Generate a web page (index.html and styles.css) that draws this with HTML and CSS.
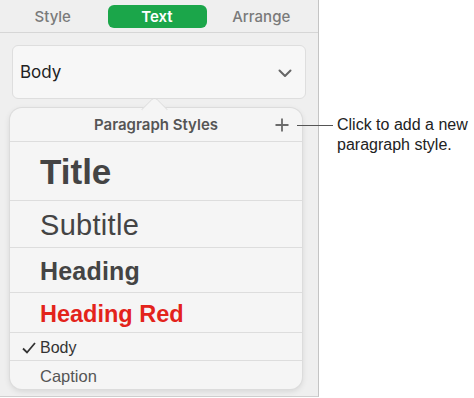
FILE: index.html
```html
<!DOCTYPE html>
<html lang="en">
<head>
    <meta charset="UTF-8">
    <title>Paragraph Styles</title>
    <link rel="stylesheet" href="styles.css">
</head>
<body>
    <div class="panel">
        <div class="tabs">
            <span class="tab">Style</span>
            <span class="tab active">Text</span>
            <span class="tab">Arrange</span>
        </div>

        <div class="dropdown">
            <span>Body</span>
            <svg class="chevron" width="14" height="9" viewBox="0 0 14 9">
                <path d="M1.5 1.5 L7 7 L12.5 1.5" fill="none" stroke="#666" stroke-width="2" stroke-linecap="round" stroke-linejoin="round"/>
            </svg>
        </div>

        <div class="popover">
            <div class="pop-head">
                <span>Paragraph Styles</span>
                <svg class="plus" width="14" height="14" viewBox="0 0 14 14">
                    <path d="M7 0.5 V13.5 M0.5 7 H13.5" stroke="#6b6b6b" stroke-width="1.8"/>
                </svg>
            </div>
            <div class="row title">Title</div>
            <div class="row subtitle">Subtitle</div>
            <div class="row heading">Heading</div>
            <div class="row heading-red">Heading Red</div>
            <div class="row body-style">
                <svg class="check" width="14" height="12" viewBox="0 0 14 12">
                    <path d="M1 6.5 L5 10.5 L13 1" fill="none" stroke="#333" stroke-width="1.8"/>
                </svg>
                Body
            </div>
            <div class="row caption">Caption</div>
        </div>
    </div>

    <!-- leader line to the plus button -->
    <div class="callout">
        <div class="leader"></div>
        <p>Click to add a new<br>paragraph style.</p>
    </div>
</body>
</html>
```

FILE: styles.css
```css
body {
    margin: 0;
    width: 474px;
    height: 398px;
    overflow: hidden;
    display: flex;
    background: #ffffff;
    font-family: Inter, "Liberation Sans", sans-serif;
    position: relative;
}

.panel {
    width: 318px;
    height: 396px;
    background: #efefef;
    border-right: 1px solid #c4c4c4;
    border-bottom: 1px solid #cfcfcf;
    display: flex;
    flex-direction: column;
}

.tabs {
    height: 31px;
    border-bottom: 1px solid #d6d6d6;
    display: flex;
    align-items: center;
    padding: 1px 12px 0 8px;
}

.tab {
    flex: 1;
    text-align: center;
    font-size: 15px;
    font-weight: 500;
    color: #7a7a7a;
    line-height: 23px;
}

.tab.active {
    flex: 0 0 99px;
    margin: 0 10px;
    background: #1ba64a;
    color: #ffffff;
    font-weight: 600;
    border-radius: 6px;
}

.dropdown {
    margin: 12px 12px 0 12px;
    height: 52px;
    background: #f7f7f7;
    border: 1px solid #dedede;
    border-radius: 6px;
    display: flex;
    align-items: center;
    justify-content: space-between;
    padding: 0 13px 0 7px;
    font-size: 17px;
    color: #222222;
}

.chevron {
    margin-top: 2px;
}

.popover {
    position: relative;
    margin: 9px 0 0 10px;
    width: 292px;
    height: 281px;
    background: #f5f5f5;
    border-radius: 12px;
    box-shadow: 0 0 0 1px #dcdcdc, 0 2px 6px rgba(0, 0, 0, 0.12);
    display: flex;
    flex-direction: column;
}

.popover::before {
    content: "";
    position: absolute;
    top: -8px;
    left: 135px;
    width: 18px;
    height: 18px;
    background: #f5f5f5;
    border-top: 1px solid #dcdcdc;
    border-left: 1px solid #dcdcdc;
    border-top-left-radius: 5px;
    transform: rotate(45deg);
}

.pop-head {
    position: relative;
    height: 33px;
    display: flex;
    align-items: center;
    justify-content: center;
    font-size: 15px;
    font-weight: 600;
    color: #555555;
    border-bottom: 1px solid #dddddd;
}

.plus {
    position: absolute;
    right: 13px;
    top: 10px;
}

.row {
    display: flex;
    align-items: center;
    padding: 2px 0 0 30px;
    box-sizing: border-box;
    font-family: "Liberation Sans", Arial, sans-serif;
    color: #444444;
    border-bottom: 1px solid #dddddd;
}

.title {
    height: 59px;
    font-size: 35px;
    font-weight: bold;
}

.subtitle {
    height: 47px;
    font-size: 29px;
    letter-spacing: 0.3px;
}

.heading {
    height: 45px;
    font-size: 25px;
    font-weight: bold;
    letter-spacing: 0.2px;
}

.heading-red {
    height: 40px;
    padding-top: 4px;
    font-size: 23.5px;
    font-weight: bold;
    color: #e3231b;
}

.body-style {
    height: 28px;
    font-size: 16px;
    color: #333333;
    position: relative;
}

.check {
    position: absolute;
    left: 12px;
    top: 9px;
}

.caption {
    flex: 1;
    padding-top: 3px;
    font-size: 16.5px;
    color: #555555;
    border-bottom: none;
}

.callout {
    position: absolute;
    left: 297px;
    top: 115px;
    display: flex;
    align-items: flex-start;
}

.leader {
    width: 36px;
    height: 1px;
    background: #555555;
    margin-top: 10px;
}

.callout p {
    margin: 0 0 0 4px;
    font-family: "Liberation Sans", Arial, sans-serif;
    font-size: 16px;
    line-height: 20px;
    color: #222222;
}
```
